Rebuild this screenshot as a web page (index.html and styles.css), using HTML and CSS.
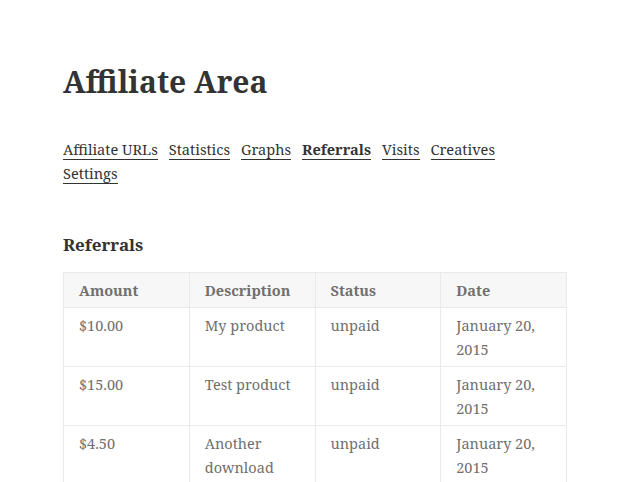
FILE: index.html
```html
<!DOCTYPE html>
<html lang="en">
<head>
    <meta charset="UTF-8">
    <title>Affiliate Area</title>
    <link rel="stylesheet" href="styles.css">
</head>
<body>
    <div class="entry">
        <h1 class="entry-title">Affiliate Area</h1>

        <ul class="affwp-tabs">
            <li><a href="#">Affiliate URLs</a></li>
            <li><a href="#">Statistics</a></li>
            <li><a href="#">Graphs</a></li>
            <li class="active"><a href="#">Referrals</a></li>
            <li><a href="#">Visits</a></li>
            <li><a href="#">Creatives</a></li>
            <li><a href="#">Settings</a></li>
        </ul>

        <h4 class="section-title">Referrals</h4>

        <table class="referrals">
            <thead>
                <tr>
                    <th>Amount</th>
                    <th>Description</th>
                    <th>Status</th>
                    <th>Date</th>
                </tr>
            </thead>
            <tbody>
                <tr>
                    <td>$10.00</td>
                    <td>My product</td>
                    <td>unpaid</td>
                    <td>January 20, 2015</td>
                </tr>
                <tr>
                    <td>$15.00</td>
                    <td>Test product</td>
                    <td>unpaid</td>
                    <td>January 20, 2015</td>
                </tr>
                <tr>
                    <td>$4.50</td>
                    <td>Another download</td>
                    <td>unpaid</td>
                    <td>January 20, 2015</td>
                </tr>
            </tbody>
        </table>
    </div>
</body>
</html>
```

FILE: styles.css
```css
body {
    margin: 0;
    background: #fff;
    color: #333;
    font-family: "Noto Serif", "DejaVu Serif", serif;
}

.entry {
    width: 504px;
    padding: 64px 0 0 63px;
}

.entry-title {
    font-size: 30px;
    font-weight: 700;
    line-height: 1.2;
    margin: 0 0 37px;
}

/* tabs wrap before the last item, like the theme's menu */
.affwp-tabs {
    list-style: none;
    max-width: 480px;
    margin: 0 0 48px;
    padding: 0;
    display: flex;
    flex-wrap: wrap;
    column-gap: 11px;
    font-size: 14.6px;
    line-height: 24px;
}

.affwp-tabs a {
    color: #333;
    text-decoration: none;
    border-bottom: 1px solid #333;
}

.affwp-tabs .active a {
    font-weight: 700;
}

.section-title {
    font-size: 17px;
    font-weight: 700;
    line-height: 24px;
    margin: 0 0 15px;
}

.referrals {
    width: 504px;
    table-layout: fixed;
    border-collapse: collapse;
    border: 1px solid #eaeaea;
    font-size: 14.5px;
    line-height: 24px;
    color: #707070;
}

.referrals th,
.referrals td {
    border: 1px solid #eaeaea;
    text-align: left;
    vertical-align: top;
    padding: 5px 10px 5px 15px;
}

.referrals th {
    background: #f7f7f7;
    font-weight: 700;
}
```
